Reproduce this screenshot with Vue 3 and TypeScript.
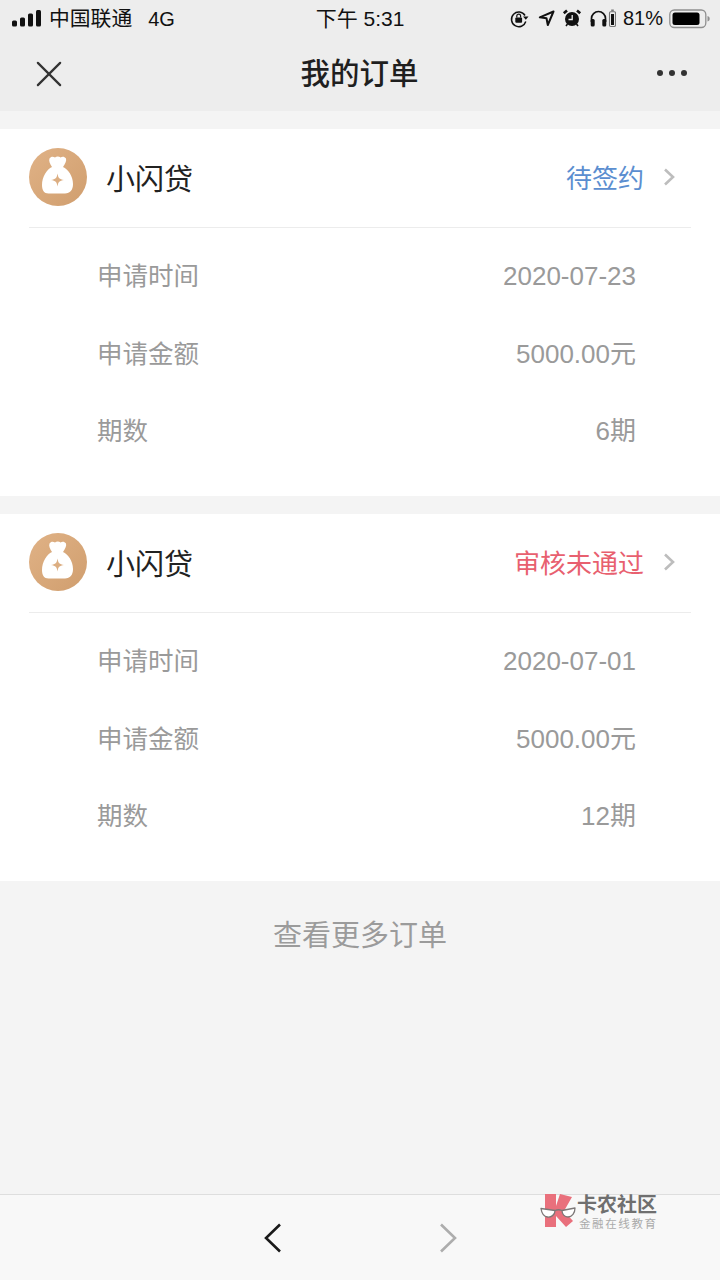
<script setup lang="ts">
interface Row { label: string; value: string }
interface Order { status: string; cls: string; rows: Row[] }
const orders: Order[] = [
  { status: '待签约', cls: 'blue', rows: [
    { label: '申请时间', value: '2020-07-23' },
    { label: '申请金额', value: '5000.00元' },
    { label: '期数', value: '6期' } ] },
  { status: '审核未通过', cls: 'red', rows: [
    { label: '申请时间', value: '2020-07-01' },
    { label: '申请金额', value: '5000.00元' },
    { label: '期数', value: '12期' } ] },
]
</script>

<template>
  <div class="page">
    <header class="top">
      <div class="status">
        <div class="st-left">
          <svg width="31" height="18" viewBox="0 0 31 18"><rect x="0" y="10.500" width="5" height="6" rx="1.500" fill="#111"/><rect x="8" y="7.500" width="5" height="9" rx="1.500" fill="#111"/><rect x="16" y="3.500" width="5" height="13" rx="1.500" fill="#111"/><rect x="24" y="0" width="5" height="16.500" rx="1.500" fill="#111"/></svg>
          <span class="carrier">中国联通<span class="net">4G</span></span>
        </div>
        <div class="st-time">下午 5:31</div>
        <div class="st-right">
          <svg width="20" height="20" viewBox="0 0 20 20" class="i-lock"><path d="M16 6.500A7.300 7.300 0 1 0 16.800 12.500" fill="none" stroke="#111" stroke-width="1.500"/><path d="M14 7.500h5.500L16.800 10.800z" fill="#111"/><rect x="6.300" y="8.500" width="6.800" height="5.200" rx="1" fill="#111"/><path d="M7.800 8.500V7a1.900 1.900 0 0 1 3.800 0v1.500" fill="none" stroke="#111" stroke-width="1.200"/></svg>
          <svg width="17" height="20" viewBox="0 0 17 20" class="i-loc"><path d="M15.500 2.500 1.800 8.300l6.700 1 1.300 6.700z" fill="none" stroke="#111" stroke-width="2" stroke-linejoin="round"/></svg>
          <svg width="20" height="20" viewBox="0 0 20 20" class="i-alarm"><circle cx="10" cy="10" r="7" fill="#111"/><path d="M10.200 6v4.500H6.500" fill="none" stroke="#eee" stroke-width="1.300"/><path d="M1.800 4.300 5 1.500M18.200 4.300 15 1.500" stroke="#111" stroke-width="2.600"/><path d="M5.500 15l-1.500 2M14.500 15l1.500 2" stroke="#111" stroke-width="1.600"/></svg>
          <svg width="26" height="20" viewBox="0 0 26 20" class="i-head"><path d="M1.500 13V9.500a7 7 0 0 1 14 0V13" fill="none" stroke="#111" stroke-width="1.700"/><rect x="0.700" y="10" width="4" height="7.500" rx="1.500" fill="#111"/><rect x="12.300" y="10" width="4" height="7.500" rx="1.500" fill="#111"/><rect x="19.500" y="2.700" width="6" height="14.800" rx="1.200" fill="none" stroke="#777" stroke-width="1.100"/><rect x="21" y="5" width="3" height="11" fill="#111"/><rect x="21.200" y="0.500" width="2.600" height="2" fill="#777"/></svg>
          <span class="pct">81%</span>
          <svg width="43" height="20" viewBox="0 0 43 20" class="i-batt"><rect x="0.800" y="1" width="36" height="17.500" rx="4.500" fill="none" stroke="#8f8f8f" stroke-width="1.300"/><rect x="3.500" y="3.600" width="27" height="12.300" rx="2.500" fill="#000"/><path d="M38.500 7v5.500c1.600-.4 2.200-1.500 2.200-2.750S40.100 7.400 38.500 7z" fill="#8f8f8f"/></svg>
        </div>
      </div>
      <div class="nav">
        <svg class="close" width="28" height="28" viewBox="0 0 28 28"><path d="M2 2 26 26M26 2 2 26" stroke="#333" stroke-width="2.400" stroke-linecap="round"/></svg>
        <h1 class="title">我的订单</h1>
        <div class="dots"><i></i><i></i><i></i></div>
      </div>
    </header>

    <main class="list">
      <section v-for="(o, idx) in orders" :key="idx" class="card">
        <div class="head">
          <svg class="logo" width="58" height="58" viewBox="0 0 58 58">
            <defs><linearGradient :id="'g' + idx" x1="0" y1="0" x2="1" y2="1"><stop offset="0" stop-color="#e0b286"/><stop offset="1" stop-color="#d09e6e"/></linearGradient></defs>
            <circle cx="29" cy="29" r="29" :fill="'url(#g' + idx + ')'"/>
            <path d="M20.500 10.500c1.500-2 3.500-2.200 5.500-1 1.500-1.500 4-1.500 5.500 0 2-1.200 4-.8 5.500 1 .8 2.500-1 5.500-3 8.500 5 2 10 9 10 17 0 6-3 9.500-8 9.500H19.500c-4.500 0-6.500-3.500-6.500-8.500 0-8 5-16 10-18-2-3-3.500-6-2.500-8.500z" fill="#fff"/>
            <path d="M28.500 25.500c.8 4.700 1.800 5.700 6.500 6.500-4.700.8-5.700 1.800-6.500 6.500-.8-4.700-1.800-5.700-6.500-6.500 4.700-.8 5.700-1.800 6.500-6.500z" fill="#dcae82"/>
          </svg>
          <span class="name">小闪贷</span>
          <span class="state" :class="o.cls">{{ o.status }}</span>
          <svg class="chev" width="12" height="20" viewBox="0 0 12 20"><path d="M2 2.500 10 10 2 17.500" fill="none" stroke="#bdbdbd" stroke-width="2.600"/></svg>
        </div>
        <div class="rows">
          <div v-for="r in o.rows" :key="r.label" class="row">
            <span class="label">{{ r.label }}</span>
            <span class="value">{{ r.value }}</span>
          </div>
        </div>
      </section>
      <div class="more">查看更多订单</div>
    </main>

    <footer class="bottom">
      <svg width="18" height="30" viewBox="0 0 18 30"><path d="M16 1.500 2 15l14 13.500" fill="none" stroke="#1a1a1a" stroke-width="2.600"/></svg>
      <svg width="18" height="30" viewBox="0 0 18 30"><path d="M2 1.500 16 15 2 28.500" fill="none" stroke="#adadad" stroke-width="2.600"/></svg>
      <div class="mark">
        <svg width="36" height="34" viewBox="0 0 36 34">
          <path d="M5 0h11v12L20 0l12 3-8 14 9 10-7 6-10-11v11H5z" fill="#e9707c"/>
          <path d="M1 14.500 15 16.500C15 21 11 23.500 7.500 23 3.500 22.500 1.500 18 1 14.500zM22 16.500 35 14C35 19 32 23 28 23 24.500 23 22 20 22 16.500z" fill="#fff" stroke="#7d7878" stroke-width="1.300" stroke-linejoin="round"/>
          <path d="M15 16.500Q18.500 15 22 16.500" fill="none" stroke="#7d7878" stroke-width="1.300"/>
        </svg>
        <div class="mark-text">
          <div class="m1">卡农社区</div>
          <div class="m2">金融在线教育</div>
        </div>
      </div>
    </footer>
  </div>
</template>

<style scoped>
.page {
  position: relative;
  width: 720px;
  height: 1280px;
  background: #f4f4f4;
  font-family: "Liberation Sans", "Noto Sans CJK SC", sans-serif;
  overflow: hidden;
  display: flex;
  flex-direction: column;
}
.top { height: 111px; background: #ededed; flex: none; }
.status {
  height: 37px;
  display: flex;
  align-items: center;
  position: relative;
  padding: 0 8px 0 12px;
  color: #111;
  font-size: 21px;
}
.st-left { display: flex; align-items: center; }
.carrier { margin: 0 0 3px 6px; font-size: 20.800px; }
.net { margin-left: 16px; font-size: 20px; }
.st-time { position: absolute; left: 0; right: 0; text-align: center; font-size: 21px; margin-bottom: 3px; }
.st-right { margin-left: auto; display: flex; align-items: center; }
.i-lock { margin-right: 9px; }
.i-loc { margin-right: 7px; }
.i-alarm { margin-right: 8px; }
.i-head { margin-right: 7px; }
.pct { margin: 0 6px 0 0; font-size: 20px; }
.nav {
  height: 74px;
  display: flex;
  align-items: center;
  justify-content: space-between;
  padding: 0 33px 3px 36px;
}
.close { width: 26px; height: 26px; }
.title {
  margin: 0 0 6px;
  font-size: 29.500px;
  font-weight: 500;
  color: #1f1f1f;
}
.dots { display: flex; gap: 6px; margin-bottom: 2px; }
.dots i { width: 6px; height: 6px; border-radius: 50%; background: #333; display: block; }
.list { flex: 1; padding-top: 18px; display: flex; flex-direction: column; gap: 18px; }
.card { background: #fff; height: 367px; }
.head {
  height: 98px;
  margin: 0 29px;
  border-bottom: 1px solid #ececec;
  display: flex;
  align-items: center;
  box-sizing: content-box;
}
.logo { flex: none; margin-top: -3px; }
.name { font-size: 29px; color: #222; margin: 0 0 2px 19px; }
.state { margin: 0 0 4px auto; font-size: 26px; }
.blue { color: #5b8ed0; }
.red { color: #e8606f; }
.chev { margin: 0 16px 2px 19px; }
.rows { padding: 10px 84px 0 97px; }
.row {
  height: 77.500px;
  box-sizing: border-box;
  padding-top: 17px;
  display: flex;
  align-items: baseline;
  justify-content: space-between;
  color: #9a9a9a;
}
.label { font-size: 25.500px; }
.value { font-size: 26px; }
.more {
  margin-top: 15px;
  text-align: center;
  font-size: 29px;
  color: #9b9b9b;
  line-height: 44px;
}
.bottom {
  position: relative;
  flex: none;
  height: 85px;
  background: #f8f8f8;
  border-top: 1px solid #dedede;
  display: flex;
  align-items: center;
  justify-content: center;
  gap: 157px;
}
.mark {
  position: absolute;
  left: 540px;
  top: -1px;
  display: flex;
  gap: 1px;
}
.m1 { font-size: 20px; font-weight: 700; color: #6f6f6f; line-height: 22px; white-space: nowrap; }
.m2 { font-size: 11.500px; color: #aaa; letter-spacing: 1.600px; line-height: 16px; margin-left: 2px; white-space: nowrap; }
</style>
<style>
html, body { margin: 0; padding: 0; }
</style>
